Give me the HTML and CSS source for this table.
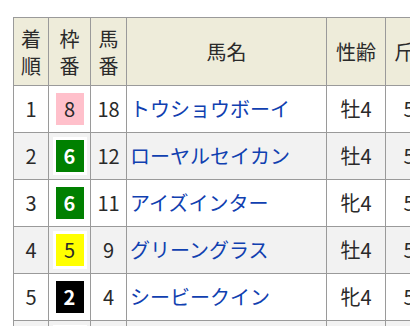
FILE: index.html
```html
<!DOCTYPE html>
<html lang="ja">
<head>
<meta charset="utf-8">
<link rel="stylesheet" href="styles.css">
</head>
<body>
<table class="result">
  <colgroup>
    <col class="c-rank"><col class="c-waku"><col class="c-num"><col class="c-name"><col class="c-sex"><col class="c-wt">
  </colgroup>
  <thead>
    <tr>
      <th>着<br>順</th>
      <th>枠<br>番</th>
      <th>馬<br>番</th>
      <th>馬名</th>
      <th>性齢</th>
      <th>斤量</th>
    </tr>
  </thead>
  <tbody>
    <tr>
      <td class="num">1</td>
      <td class="num"><span class="waku w8">8</span></td>
      <td class="num">18</td>
      <td class="name"><a href="#">トウショウボーイ</a></td>
      <td class="num">牡4</td>
      <td class="num">57</td>
    </tr>
    <tr class="alt">
      <td class="num">2</td>
      <td class="num"><span class="waku w6">6</span></td>
      <td class="num">12</td>
      <td class="name"><a href="#">ローヤルセイカン</a></td>
      <td class="num">牡4</td>
      <td class="num">57</td>
    </tr>
    <tr>
      <td class="num">3</td>
      <td class="num"><span class="waku w6">6</span></td>
      <td class="num">11</td>
      <td class="name"><a href="#">アイズインター</a></td>
      <td class="num">牝4</td>
      <td class="num">55</td>
    </tr>
    <tr class="alt">
      <td class="num">4</td>
      <td class="num"><span class="waku w5">5</span></td>
      <td class="num">9</td>
      <td class="name"><a href="#">グリーングラス</a></td>
      <td class="num">牡4</td>
      <td class="num">57</td>
    </tr>
    <tr>
      <td class="num">5</td>
      <td class="num"><span class="waku w2">2</span></td>
      <td class="num">4</td>
      <td class="name"><a href="#">シービークイン</a></td>
      <td class="num">牝4</td>
      <td class="num">55</td>
    </tr>
    <tr class="alt">
      <td class="num">6</td>
      <td class="num"><span class="waku w1">1</span></td>
      <td class="num">1</td>
      <td class="name"><a href="#">ニッポーキング</a></td>
      <td class="num">牡4</td>
      <td class="num">57</td>
    </tr>
  </tbody>
</table>
</body>
</html>
```
FILE: styles.css
```css
html, body {
  margin: 0;
  padding: 0;
  overflow: hidden;
  background: #fff;
}
body {
  font-family: "Noto Sans CJK JP", "Noto Sans", sans-serif;
  color: #2a2a2a;
  font-size: 20px;
}
.result {
  margin: 17px 0 0 13px;
  border-collapse: collapse;
  table-layout: fixed;
  width: 430px;
}
.c-rank { width: 35px; }
.c-waku { width: 42px; }
.c-num { width: 36px; }
.c-name { width: 200px; }
.c-sex { width: 59px; }
.c-wt { width: 58px; }
.result th,
.result td {
  border: 1px solid #9a9a9a;
  padding: 0;
  white-space: nowrap;
  overflow: hidden;
}
.result th {
  background: #eeecda;
  font-weight: normal;
  height: 67px;
  line-height: 27px;
  text-align: center;
  vertical-align: middle;
}
.result td {
  height: 46px;
  line-height: 24px;
  vertical-align: middle;
}
.result tr.alt td {
  background: #f2f2f2;
}
.num {
  text-align: center;
}
.name {
  padding-left: 3px !important;
}
.name a {
  color: #1040b0;
  text-decoration: none;
}
.waku {
  display: inline-block;
  width: 28px;
  height: 32px;
  line-height: 32px;
  border: 3px solid #fff;
  vertical-align: middle;
  text-align: center;
  font-size: 20px;
}
.w8 { background: #ffc0cb; color: #2a2a2a; }
.w6 { background: #008000; color: #fff; font-weight: bold; }
.w5 { background: #ffff00; color: #2a2a2a; }
.w2 { background: #000; color: #fff; font-weight: bold; }
.w1 { background: #fff; color: #2a2a2a; border-color: #fff; }
```
